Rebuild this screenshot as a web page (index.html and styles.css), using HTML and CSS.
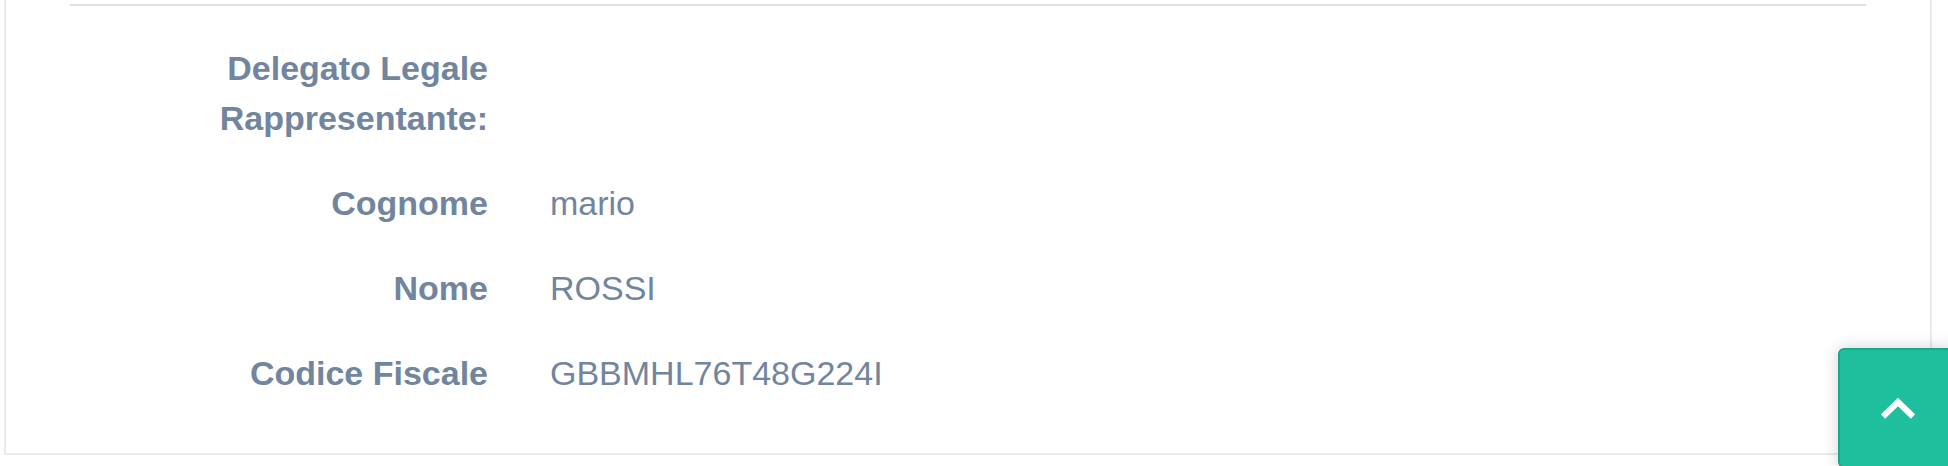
FILE: index.html
```html
<!DOCTYPE html>
<html lang="it">
<head>
<meta charset="utf-8">
<title>Delegato Legale Rappresentante</title>
<link rel="stylesheet" href="styles.css">
</head>
<body>
<div class="card">
  <hr class="divider">
  <dl class="details">
    <div class="row">
      <dt class="label">Delegato Legale Rappresentante:</dt>
      <dd class="value"></dd>
    </div>
    <div class="row">
      <dt class="label">Cognome</dt>
      <dd class="value">mario</dd>
    </div>
    <div class="row">
      <dt class="label">Nome</dt>
      <dd class="value">ROSSI</dd>
    </div>
    <div class="row">
      <dt class="label">Codice Fiscale</dt>
      <dd class="value">GBBMHL76T48G224I</dd>
    </div>
  </dl>
</div>
<a class="to-top" href="#" aria-label="Torna su">
  <svg width="36" height="24" viewBox="0 0 36 24" aria-hidden="true">
    <polyline points="3,20.5 18,6 33,20.5" fill="none" stroke="#fff" stroke-width="6" stroke-linejoin="miter"/>
  </svg>
</a>
</body>
</html>
```

FILE: styles.css
```css
html, body {
  margin: 0;
  padding: 0;
  background: #ffffff;
}

body {
  font-family: "Liberation Sans", Arial, Helvetica, sans-serif;
  overflow: hidden;
}

.card {
  margin: 0 16px 0 4px;
  border: 2px solid #e7eaee;
  border-top: 0;
  background: #ffffff;
  padding: 4px 64px 55px 64px;
}

.divider {
  margin: 0;
  border: 0;
  border-top: 2px solid #dfdfdf;
  height: 0;
}

.details {
  margin: 37px 0 0 0;
  display: flex;
  flex-direction: column;
  gap: 35px;
}

.row {
  display: grid;
  grid-template-columns: 418px 1fr;
  column-gap: 62px;
  font-size: 34px;
  line-height: 50px;
  color: #71859e;
}

.label {
  margin: 0;
  font-weight: 700;
  text-align: right;
  padding-left: 140px;
}

.value {
  margin: 0;
  font-weight: 400;
  font-size: 34px;
}

.to-top {
  position: fixed;
  left: 1838px;
  top: 348px;
  width: 120px;
  height: 120px;
  box-sizing: border-box;
  background: #1dbf9c;
  border: 2px solid #17a98a;
  border-radius: 6px;
  box-shadow: 0 0 16px rgba(0, 0, 0, 0.18);
  display: flex;
  align-items: center;
  justify-content: center;
}

.to-top svg {
  display: block;
}
```
